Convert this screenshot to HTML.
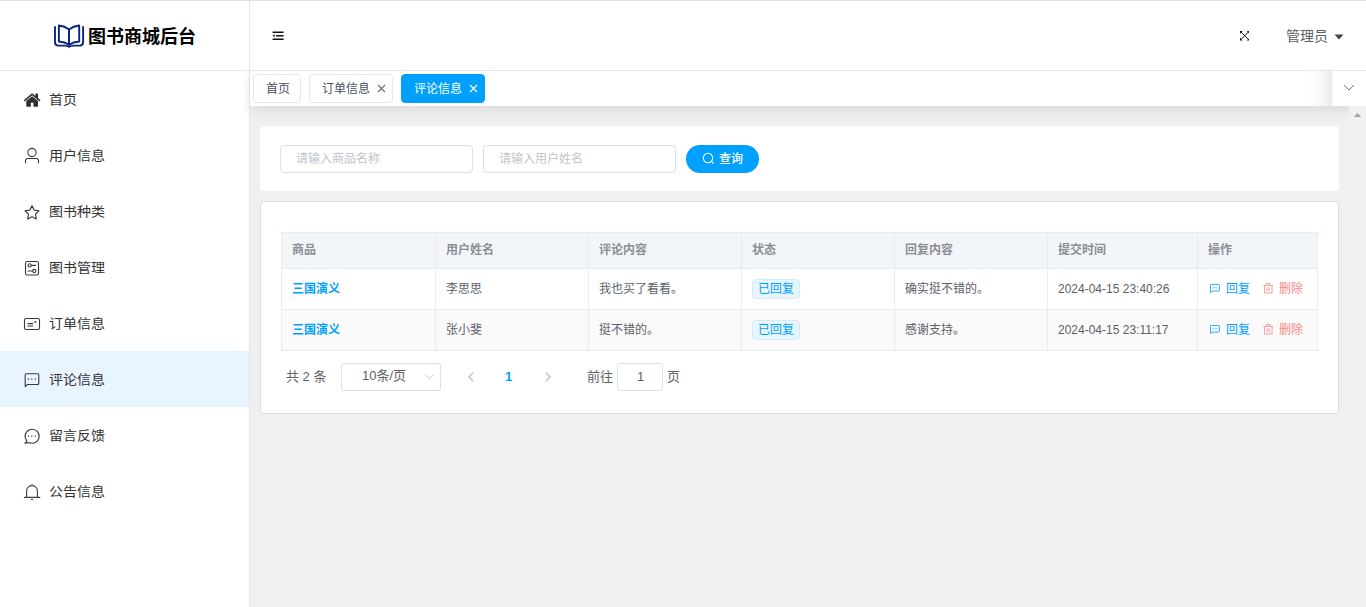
<!DOCTYPE html>
<html lang="zh-CN">
<head>
<meta charset="utf-8">
<title>图书商城后台</title>
<style>
*{box-sizing:border-box;margin:0;padding:0}
html,body{width:1366px;height:607px;overflow:hidden;background:#f0f0f0}
body{position:relative;font-family:"Liberation Sans","Noto Sans CJK SC",sans-serif;font-size:14px;color:#333}
.abs{position:absolute}
/* sidebar */
#side{position:absolute;left:0;top:0;width:250px;height:607px;background:#fff;border-right:1px solid #e6e6e6}
#logo{position:absolute;left:0;top:0;width:249px;height:71px;border-bottom:1px solid #e6e6e6}
#logo svg{position:absolute;left:50px;top:20px}
#logo span{position:absolute;left:88px;top:24px;font-size:18px;font-weight:700;color:#000;line-height:26px;white-space:nowrap}
.mi{position:absolute;left:0;width:249px;height:56px;color:#333}
.mi.on{background:#e8f4ff}
.mi svg{position:absolute;left:22px;top:18px;width:20px;height:20px}
.mi span{position:absolute;left:49px;top:17px;line-height:22px;font-size:14px;white-space:nowrap;transform:scaleY(.92);transform-origin:0 19px}
/* header */
#head{z-index:3;position:absolute;left:250px;top:0;width:1116px;height:71px;background:#fff;border-bottom:1px solid #e6e6e6}
#tags{position:absolute;left:250px;top:71px;width:1116px;height:35px;background:#fff;box-shadow:0 5px 10px #ddd}
.tag{position:absolute;top:3px;height:29px;border:1px solid #e4e7ed;border-radius:4px;background:#fff;color:#495060;font-size:12px;line-height:27px;white-space:nowrap}
.tag.on{background:#00a0ff;border-color:#00a0ff;color:#fff}
.tag b{font-weight:400;position:absolute;top:1px}
#more{position:absolute;left:1082px;top:0;width:34px;height:35px;background:#fff}
#moresh{position:absolute;left:1056px;top:0;width:26px;height:35px;background:linear-gradient(to right,rgba(0,0,0,0) 0,rgba(0,0,0,.008) 30%,rgba(0,0,0,.035) 65%,rgba(0,0,0,.085) 100%)}
/* content */
.card{position:absolute;background:#fff;border-radius:4px}
.inp{position:absolute;top:19px;width:193px;height:28px;border:1px solid #dcdfe6;border-radius:4px;color:#c0c4cc;font-size:12px;line-height:27px;padding-left:15px}
#btn{position:absolute;left:426px;top:19px;width:73px;height:28px;border-radius:14px;background:#00a0ff;color:#fff;font-size:12px;line-height:28px;font-weight:500}
table{position:absolute;left:20px;top:30px;border-collapse:collapse;table-layout:fixed;width:1036px;font-size:12px}
th,td{border:1px solid #e6ebf5;text-align:left;padding:0 0 0 10px;white-space:nowrap;overflow:hidden;line-height:20px;vertical-align:middle}
th{height:36px;padding-bottom:1px;background:#f3f6f9;color:#8b8e95;font-weight:700;font-size:12px}
td{height:41px;color:#5c6066}
tr.alt td{background:#fafafa}
.lnk{color:#00a0ff;font-weight:700}
.st{display:inline-block;height:20px;line-height:18px;padding:0 5px;border:1px solid #d3ebfd;background:#e7f5fe;color:#00a0ff;border-radius:4px;font-size:12px}
td.op{position:relative}
td.op .ic{position:absolute;left:12px;top:15.400px}
td.op .rp{position:absolute;left:28px;top:10px;color:#00a0ff}
td.op .ic2{position:absolute;left:64.800px;top:14.200px}
td.op .dl{position:absolute;left:81px;top:10px;color:#f78989}
.pg{position:absolute;font-size:13px;line-height:27px;color:#606266;white-space:nowrap;top:161px;height:28px}
.pgb{position:absolute;top:161px;height:28px;border:1px solid #dcdfe6;border-radius:3px;background:#fff}
</style>
</head>
<body>
<div class="abs" style="left:0;top:0;width:1366px;height:1px;background:#dfe1e1;z-index:9"></div>
<div id="side">
  <div id="logo">
    <svg width="40" height="32" viewBox="0 0 40 32" fill="none" stroke="#0a2680" stroke-width="1.900" stroke-linejoin="round" stroke-linecap="round"><path d="M5 7V22.200Q5 25.600 8.400 25.600H14.500Q17.600 25.600 19.050 26.900Q20.500 25.600 23.600 25.600H29.700Q33.100 25.600 33.100 22.200V7"/><path d="M8.900 5.500Q14.800 6.100 19.050 9.400V24.800Q14.800 21.900 8.900 21.500z"/><path d="M29.200 5.500Q23.300 6.100 19.050 9.400V24.800Q23.300 21.900 29.200 21.500z"/></svg>
    <span>图书商城后台</span>
  </div>
  <div class="mi" style="top:71px"><svg viewBox="0 0 1792 1792" style="left:23.300px;top:19.600px;width:18.300px;height:18.300px"><path fill="#2f2f2f" d="M1472 992v480q0 26-19 45t-45 19h-384v-384h-256v384h-384q-26 0-45-19t-19-45v-480q0-1 .5-3t.5-3l575-474 575 474q1 2 1 6zm223-69l-62 74q-8 9-21 11h-3q-13 0-21-7l-692-577-692 577q-12 8-24 7-13-2-21-11l-62-74q-8-10-7-23.5t11-21.5l719-599q32-26 76-26t76 26l244 204v-195q0-14 9-23t23-9h192q14 0 23 9t9 23v408l219 182q10 8 11 21.5t-7 23.5z"/></svg><span>首页</span></div>
  <div class="mi" style="top:127px"><svg viewBox="0 0 20 20" fill="none" stroke="#3a3a3a" stroke-width="1.100" stroke-linejoin="round" stroke-linecap="round"><circle cx="10" cy="7.500" r="4.100"/><path d="M3.500 18.300v-2.300a2.500 2.500 0 0 1 2.500-2.500h8a2.500 2.500 0 0 1 2.500 2.500v2.300" stroke-linecap="butt"/></svg><span>用户信息</span></div>
  <div class="mi" style="top:183px"><svg viewBox="0 0 20 20" fill="none" stroke="#3a3a3a" stroke-width="1.100" stroke-linejoin="round" stroke-linecap="round"><path d="M10 4.700l2.150 4.350 4.800.7-3.480 3.390.82 4.780L10 15.660l-4.290 2.260.82-4.780L3.050 9.750l4.800-.7z" stroke-width="1.200"/></svg><span>图书种类</span></div>
  <div class="mi" style="top:239px"><svg viewBox="0 0 20 20" fill="none" stroke="#3a3a3a" stroke-width="1.100" stroke-linejoin="round" stroke-linecap="round"><rect x="3.500" y="4.500" width="13" height="13.500" rx="1.800"/><circle cx="7.600" cy="8.400" r="1.600"/><path d="M9.300 8.400h4.200"/><circle cx="12.300" cy="14" r="1.600"/><path d="M6 14h4.600"/></svg><span>图书管理</span></div>
  <div class="mi" style="top:295px"><svg viewBox="0 0 20 20" fill="none" stroke="#3a3a3a" stroke-width="1.100" stroke-linejoin="round" stroke-linecap="round"><rect x="2.500" y="5.500" width="15" height="11" rx="1.500"/><path d="M5.800 10.600h5M5.800 13h5"/><circle cx="13.400" cy="9" r="1" fill="#3a3a3a" stroke="none"/></svg><span>订单信息</span></div>
  <div class="mi on" style="top:351px"><svg viewBox="0 0 20 20" fill="none" stroke="#3a3a3a" stroke-width="1.100" stroke-linejoin="round" stroke-linecap="round"><path d="M3.200 17.600V6a1.300 1.300 0 0 1 1.300-1.300h11a1.300 1.300 0 0 1 1.300 1.300v8.200a1.300 1.300 0 0 1-1.300 1.300H5.600z"/><path d="M5.800 10.100h1.200M9.200 10.100h1.200M12.800 10.100h1.200" stroke-width="1.400" stroke-linecap="butt"/></svg><span>评论信息</span></div>
  <div class="mi" style="top:407px"><svg viewBox="0 0 20 20" fill="none" stroke="#3a3a3a" stroke-width="1.100" stroke-linejoin="round" stroke-linecap="round"><path d="M4.900 15.900A7 7 0 1 1 7.200 17.600L2.900 18.300z"/><path d="M5.800 11.100h1.200M9.200 11.100h1.200M12.800 11.100h1.200" stroke-width="1.400" stroke-linecap="butt"/></svg><span>留言反馈</span></div>
  <div class="mi" style="top:463px"><svg viewBox="0 0 20 20" fill="none" stroke="#3a3a3a" stroke-width="1.100" stroke-linejoin="round" stroke-linecap="round"><path d="M4.600 16.400V10a5.400 5.400 0 0 1 10.800 0v6.400M2.400 16.400h15.400M9.200 18.500h1.600M10 3.500v1"/></svg><span>公告信息</span></div>
</div>

<div id="head">
  <svg class="abs" style="left:22px;top:30px" width="13" height="12" viewBox="0 0 13 12" fill="none" stroke="#111" stroke-width="1.400"><path d="M.6 2.200h11M4 5.800h7.600M.6 9.300h11"/><path d="M2.700 4.300v3L.5 5.800z" fill="#111" stroke="none"/></svg>
  <svg class="abs" style="left:989.700px;top:31.200px" width="9.400" height="9.400" viewBox="0 0 10 10" fill="none" stroke="#111" stroke-width="1.050"><path d="M1.200 1.200l7.600 7.600M8.800 1.200l-7.600 7.600"/><path d="M0 0h2.800L0 2.800zM10 0H7.200L10 2.800zM0 10h2.800L0 7.200zM10 10H7.200L10 7.200z" fill="#111" stroke="none"/></svg>
  <span class="abs" style="left:1036px;top:25px;font-size:14px;line-height:22px;color:#5a5e66">管理员</span>
  <svg class="abs" style="left:1084px;top:34px" width="10" height="6" viewBox="0 0 10 6"><path d="M0.500 0.500h9L5 5.500z" fill="#444"/></svg>
</div>

<div id="tags">
  <div class="tag" style="left:3px;width:48px"><b style="left:12px">首页</b></div>
  <div class="tag" style="left:59px;width:84px"><b style="left:12px">订单信息</b><svg class="abs" style="left:66.500px;top:9px" width="9" height="9" viewBox="0 0 9 9" stroke="#707070" stroke-width="1.150" fill="none"><path d="M1 1l7 7M8 1l-7 7"/></svg></div>
  <div class="tag on" style="left:151px;width:84px"><b style="left:12px">评论信息</b><svg class="abs" style="left:66.500px;top:9px" width="9" height="9" viewBox="0 0 9 9" stroke="#fff" stroke-width="1.200" fill="none"><path d="M1 1l7 7M8 1l-7 7"/></svg></div>
  <div id="moresh"></div><div id="more"><svg class="abs" style="left:11px;top:13px" width="12" height="7" viewBox="0 0 12 7" fill="none" stroke="#70777f" stroke-width="1"><path d="M1 1l5 5 5-5"/></svg></div>
</div>

<div class="abs" style="left:1349px;top:106px;width:17px;height:501px;background:#f1f1f1"></div>
<svg class="abs" style="left:1354px;top:113px" width="7" height="4" viewBox="0 0 7 4"><path d="M0 4 3.500 0 7 4z" fill="#a3a3a3"/></svg>

<div class="card" style="left:260px;top:126px;width:1079px;height:65px">
  <div class="inp" style="left:20px">请输入商品名称</div>
  <div class="inp" style="left:223px">请输入用户姓名</div>
  <div id="btn"><svg class="abs" style="left:16px;top:7px" width="13" height="13" viewBox="0 0 13 13" fill="none" stroke="#fff" stroke-width="1.100"><circle cx="6" cy="6" r="4.700"/><path d="M9.400 9.400l2.300 2.300"/></svg><span class="abs" style="left:33px;top:0">查询</span></div>
</div>

<div class="card" style="left:260px;top:201px;width:1079px;height:213px;border:1px solid #dcdcdc">
  <table>
    <colgroup><col style="width:154px"><col style="width:153px"><col style="width:153px"><col style="width:153px"><col style="width:153px"><col style="width:150px"><col style="width:120px"></colgroup>
    <tr><th>商品</th><th>用户姓名</th><th>评论内容</th><th>状态</th><th>回复内容</th><th>提交时间</th><th>操作</th></tr>
    <tr><td><span class="lnk">三国演义</span></td><td>李思思</td><td>我也买了看看。</td><td><span class="st">已回复</span></td><td>确实挺不错的。</td><td>2024-04-15 23:40:26</td><td class="op"><svg class="ic" width="10.300" height="9.400" viewBox="0 0 11 10" fill="none" stroke="#1aa9ff" stroke-width="1"><path d="M.5 9.300V1.200a.7.700 0 0 1 .7-.7h8.100a.7.700 0 0 1 .7.700v5.600a.7.700 0 0 1-.7.700H2.300z"/><path d="M3 4h1M4.900 4h1M6.800 4h1" stroke-width="1.100"/></svg><span class="rp">回复</span><svg class="ic2" width="10.500" height="10.500" viewBox="0 0 11 11" fill="none" stroke="#f89a9a" stroke-width="1"><path d="M.3 2.500h10.400M3.500 2.500V.5h4v2M1.500 2.500v8h8v-8M4.500 4.500v4M6.500 4.500v4"/></svg><span class="dl">删除</span></td></tr>
    <tr class="alt"><td><span class="lnk">三国演义</span></td><td>张小斐</td><td>挺不错的。</td><td><span class="st">已回复</span></td><td>感谢支持。</td><td>2024-04-15 23:11:17</td><td class="op"><svg class="ic" width="10.300" height="9.400" viewBox="0 0 11 10" fill="none" stroke="#1aa9ff" stroke-width="1"><path d="M.5 9.300V1.200a.7.700 0 0 1 .7-.7h8.100a.7.700 0 0 1 .7.700v5.600a.7.700 0 0 1-.7.700H2.300z"/><path d="M3 4h1M4.900 4h1M6.800 4h1" stroke-width="1.100"/></svg><span class="rp">回复</span><svg class="ic2" width="10.500" height="10.500" viewBox="0 0 11 11" fill="none" stroke="#f89a9a" stroke-width="1"><path d="M.3 2.500h10.400M3.500 2.500V.5h4v2M1.500 2.500v8h8v-8M4.500 4.500v4M6.500 4.500v4"/></svg><span class="dl">删除</span></td></tr>
  </table>
  <span class="pg" style="left:25px">共 2 条</span>
  <div class="pgb" style="left:80px;width:100px"><span class="pg" style="left:20px;top:-1px;line-height:26px">10条/页</span><svg class="abs" style="left:82.500px;top:10px" width="9" height="6" viewBox="0 0 9 6" fill="none" stroke="#c0c4cc" stroke-width="1"><path d="M.5.800l4 4 4-4"/></svg></div>
  <svg class="abs" style="left:207px;top:170px" width="6" height="10" viewBox="0 0 6 10" fill="none" stroke="#bfc3cb" stroke-width="1.600"><path d="M5 .800 1 5l4 4.200"/></svg>
  <span class="pg" style="left:244px;color:#00a0ff;font-weight:700">1</span>
  <svg class="abs" style="left:284px;top:170px" width="6" height="10" viewBox="0 0 6 10" fill="none" stroke="#bfc3cb" stroke-width="1.600"><path d="M1 .800 5 5 1 9.200"/></svg>
  <span class="pg" style="left:326px">前往</span>
  <div class="pgb" style="left:356px;width:46px;border-radius:4px"><span class="pg" style="left:19px;top:-1px">1</span></div>
  <span class="pg" style="left:406px">页</span>
</div>
</body>
</html>
